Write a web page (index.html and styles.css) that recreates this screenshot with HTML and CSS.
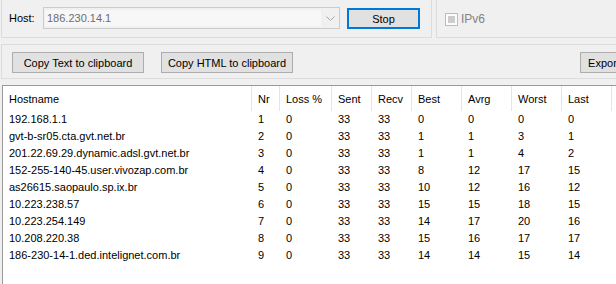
FILE: index.html
```html
<!DOCTYPE html>
<html lang="en">
<head>
  <meta charset="UTF-8">
  <title>Trace Route</title>
  <link rel="stylesheet" href="styles.css">
</head>
<body>
  <div class="top">
    <div class="group host-group">
      <label class="host-label" for="host">Host:</label>
      <div class="combo">
        <span class="combo-field" id="host">186.230.14.1</span>
        <span class="combo-arrow">
          <svg width="9" height="5" viewBox="0 0 9 5"><polyline points="0.5,0.5 4.5,4.5 8.5,0.5" fill="none" stroke="#a6a6a6" stroke-width="1"/></svg>
        </span>
      </div>
      <button class="btn btn-default">Stop</button>
    </div>
    <div class="group opt-group">
      <span class="check"><span class="check-mark"></span></span>
      <span class="check-label">IPv6</span>
    </div>
  </div>

  <div class="group tools">
    <button class="btn wide">Copy Text to clipboard</button>
    <button class="btn wide">Copy HTML to clipboard</button>
    <button class="btn export">Export</button>
  </div>

  <div class="list">
    <table class="hops">
      <colgroup>
        <col style="width:249px">
        <col style="width:28px">
        <col style="width:52px">
        <col style="width:40px">
        <col style="width:40px">
        <col style="width:50px">
        <col style="width:50px">
        <col style="width:50px">
        <col style="width:50px">
        <col>
      </colgroup>
      <thead>
        <tr>
          <th>Hostname</th>
          <th>Nr</th>
          <th>Loss %</th>
          <th>Sent</th>
          <th>Recv</th>
          <th>Best</th>
          <th>Avrg</th>
          <th>Worst</th>
          <th>Last</th>
          <th></th>
        </tr>
      </thead>
      <tbody>
        <tr><td>192.168.1.1</td><td>1</td><td>0</td><td>33</td><td>33</td><td>0</td><td>0</td><td>0</td><td>0</td><td></td></tr>
        <tr><td>gvt-b-sr05.cta.gvt.net.br</td><td>2</td><td>0</td><td>33</td><td>33</td><td>1</td><td>1</td><td>3</td><td>1</td><td></td></tr>
        <tr><td>201.22.69.29.dynamic.adsl.gvt.net.br</td><td>3</td><td>0</td><td>33</td><td>33</td><td>1</td><td>1</td><td>4</td><td>2</td><td></td></tr>
        <tr><td>152-255-140-45.user.vivozap.com.br</td><td>4</td><td>0</td><td>33</td><td>33</td><td>8</td><td>12</td><td>17</td><td>15</td><td></td></tr>
        <tr><td>as26615.saopaulo.sp.ix.br</td><td>5</td><td>0</td><td>33</td><td>33</td><td>10</td><td>12</td><td>16</td><td>12</td><td></td></tr>
        <tr><td>10.223.238.57</td><td>6</td><td>0</td><td>33</td><td>33</td><td>15</td><td>15</td><td>18</td><td>15</td><td></td></tr>
        <tr><td>10.223.254.149</td><td>7</td><td>0</td><td>33</td><td>33</td><td>14</td><td>17</td><td>20</td><td>16</td><td></td></tr>
        <tr><td>10.208.220.38</td><td>8</td><td>0</td><td>33</td><td>33</td><td>15</td><td>16</td><td>17</td><td>17</td><td></td></tr>
        <tr><td>186-230-14-1.ded.intelignet.com.br</td><td>9</td><td>0</td><td>33</td><td>33</td><td>14</td><td>14</td><td>15</td><td>14</td><td></td></tr>
      </tbody>
    </table>
  </div>
</body>
</html>
```

FILE: styles.css
```css
/* Base */
* {
  box-sizing: border-box;
  margin: 0;
  padding: 0;
}
html, body {
  height: 284px;
  overflow: hidden;
}
body {
  font-family: 'Liberation Sans', Arial, sans-serif;
  font-size: 11px;
  color: #000;
  background-color: #f0f0f0;
  width: 616px;
}

/* Group boxes */
.group {
  border: 1px solid #dcdcdc;
}
.top {
  display: flex;
  height: 38px;
}
.host-group {
  display: flex;
  align-items: flex-start;
  flex-shrink: 0;
  width: 431px;
  height: 38px;
  margin-left: 1px;
  border-top: none;
  padding: 7px 0 0 7px;
}
.opt-group {
  display: flex;
  align-items: center;
  flex-shrink: 0;
  width: 190px;
  height: 38px;
  margin-left: 4px;
  border-top: none;
  border-right: none;
  padding: 1px 0 0 8px;
}
.host-label {
  width: 34px;
  line-height: 22px;
}

/* Combo box (disabled) */
.combo {
  display: flex;
  width: 297px;
  height: 22px;
  border: 1px solid #cccccc;
  background-color: #f0f0f0;
  padding: 2px 0 2px 1px;
}
.combo-field {
  flex: 1;
  background-color: #f7f7f7;
  color: #6d6d6d;
  line-height: 16px;
  padding-left: 2px;
}
.combo-arrow {
  width: 18px;
  display: flex;
  align-items: center;
  justify-content: center;
  padding-left: 1px;
}

/* Buttons */
.btn {
  font-family: inherit;
  font-size: 11px;
  color: #000;
  background-color: #e1e1e1;
  border: 1px solid #adadad;
  height: 21px;
  cursor: pointer;
}
.btn-default {
  width: 73px;
  margin: 1px 0 0 7px;
  border: 2px solid #0078d7;
}

/* IPv6 checkbox */
.check {
  display: flex;
  width: 13px;
  height: 13px;
  border: 1px solid #bcbcbc;
  background-color: #fcfcfc;
  padding: 2px;
}
.check-mark {
  flex: 1;
  background-color: #cccccc;
}
.check-label {
  color: #838383;
  margin-left: 3px;
  font-size: 12px;
}

/* Toolbar group */
.tools {
  display: flex;
  align-items: flex-start;
  width: 639px;
  height: 35px;
  margin: 6px 0 0 1px;
  padding: 7px 11px 0 10px;
}
.wide {
  width: 132px;
}
.wide + .wide {
  margin-left: 17px;
}
.export {
  width: 48px;
  margin-left: auto;
}

/* List view */
.list {
  width: 614px;
  height: 199px;
  margin: 6px 0 0 2px;
  border-top: 1px solid #999;
  border-left: 1px solid #999;
  background-color: #fff;
  overflow: hidden;
}
.hops {
  table-layout: fixed;
  width: 640px;
  border-collapse: separate;
  border-spacing: 0;
}
.hops th {
  height: 25px;
  font-weight: normal;
  text-align: left;
  padding: 0 0 0 6px;
  border-right: 1px solid #e5e5e5;
  white-space: nowrap;
  overflow: hidden;
}
.hops th:last-child {
  border-right: none;
}
.hops td {
  height: 17px;
  line-height: 17px;
  padding: 0 0 0 6px;
  white-space: nowrap;
  overflow: hidden;
}
```
